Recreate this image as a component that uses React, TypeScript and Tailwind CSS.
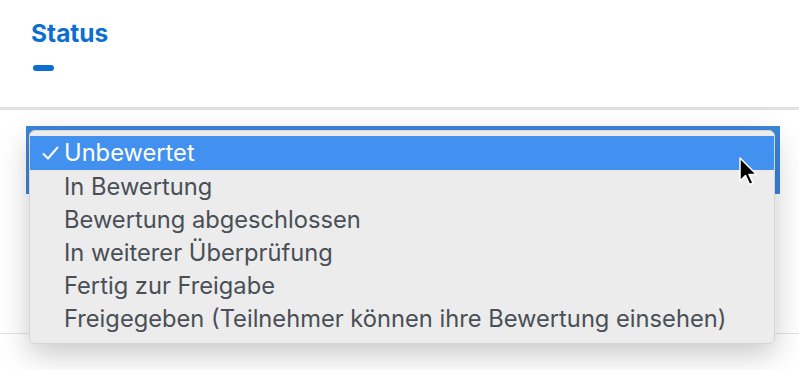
import { useState } from 'react'

const optionen = [
  'Unbewertet',
  'In Bewertung',
  'Bewertung abgeschlossen',
  'In weiterer Überprüfung',
  'Fertig zur Freigabe',
  'Freigegeben (Teilnehmer können ihre Bewertung einsehen)',
]

export default function App() {
  const [aktiv] = useState(0)

  return (
    <main className="relative min-h-[370px] w-[799px] overflow-hidden bg-white font-['Inter','Liberation_Sans',sans-serif]">
      {/* Kopf mit Tab */}
      <div className="h-[110px] border-b-[3px] border-[#e0e0e4] pl-[31px] pt-[19px]">
        <h2 className="text-[24.5px] font-bold leading-[28px] text-[#0a6fd0]">Status</h2>
        <div className="ml-[2px] mt-[18px] h-[6px] w-[21px] rounded-full bg-[#0a6fd0]" />
      </div>

      {/* Feld mit Fokusrahmen */}
      <div className="h-[224px] border-b border-[#dfe3e8] pl-[26px] pt-[16px]">
        <div className="h-[68px] w-[754px] bg-[#3b86da]" />
      </div>

      {/* Aufgeklapptes Menü */}
      <div className="absolute left-[29px] top-[130px] h-[214px] w-[746px] rounded-[6px] border border-[#d6d6d6] bg-[#ececec] pt-[5px] shadow-[0_10px_30px_rgba(0,0,0,0.22)]">
        {optionen.map((o, i) => (
          <div
            key={o}
            className={
              i === aktiv
                ? 'flex h-[34px] items-center bg-[#4290f0] text-white'
                : 'flex h-[33px] items-center text-[#4a4f56]'
            }
          >
            <span className="flex w-[34px] justify-end pr-[5px]">
              {i === aktiv && (
                <svg width="17" height="15" viewBox="0 0 17 15" fill="none">
                  <path d="M1.5 8 L6 12.5 L15.5 1.5" stroke="white" strokeWidth="2" strokeLinecap="round" strokeLinejoin="round" />
                </svg>
              )}
            </span>
            <span className="text-[23.7px] leading-none">{o}</span>
          </div>
        ))}
      </div>

      {/* Mauszeiger */}
      <svg className="absolute left-[738px] top-[157px]" width="20" height="32" viewBox="0 0 20 32">
        <path d="M2 1 L2 24 L7.5 18.5 L11.5 27.5 L15 26 L11 17.5 L18.5 17.5 Z" fill="black" stroke="white" strokeWidth="1.5" strokeLinejoin="round" />
      </svg>
    </main>
  )
}
